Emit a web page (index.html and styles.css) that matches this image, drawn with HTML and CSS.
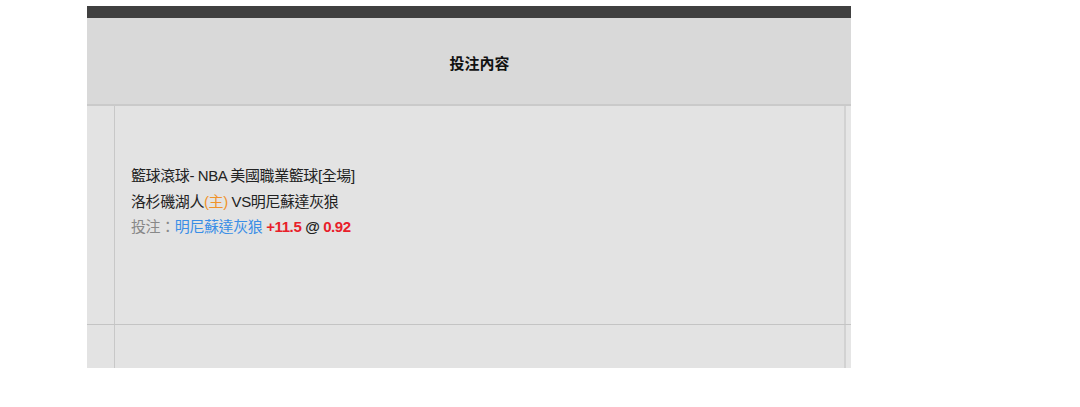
FILE: index.html
```html
<!DOCTYPE html>
<html>

<head>
    <meta charset="utf-8">
    <title>投注內容</title>
    <link rel="stylesheet" href="styles.css">
</head>

<body>
    <div class="wrap">
        <div class="topbar"></div>
        <div class="head">
            <div class="side"></div>
            <div class="title">投注內容</div>
            <div class="side"></div>
        </div>
        <div class="row">
            <div class="side"></div>
            <div class="cell">
                <p>籃球滾球- NBA 美國職業籃球[全場]</p>
                <p>洛杉磯湖人<span class="home">(主)</span> VS明尼蘇達灰狼</p>
                <p><span class="label">投注：</span><span class="team">明尼蘇達灰狼</span> <b class="red">+11.5</b> <b>@</b> <b class="red">0.92</b></p>
            </div>
            <div class="side end"></div>
        </div>
        <div class="row short">
            <div class="side"></div>
            <div class="cell"></div>
            <div class="side end"></div>
        </div>
    </div>
</body>

</html>
```

FILE: styles.css
```css
*{
    padding: 0;
    margin: 0;
}
body{
    background-color: #fff;
    font-family: "Liberation Sans", "Noto Sans CJK TC", sans-serif;
    color: #222;
}
.wrap{
    width: 764px;
    margin: 6px 0 0 87px;
}
.topbar{
    height: 12px;
    background-color: #404040;
}
.head{
    display: grid;
    grid-template-columns: 28px 1fr 7px;
    height: 86px;
    background-color: #d9d9d9;
    border-bottom: 2px solid #cacaca;
}
.title{
    display: flex;
    align-items: center;
    justify-content: center;
    font-size: 15px;
    font-weight: 700;
    color: #111;
    padding-top: 2px;
}
.row{
    display: grid;
    grid-template-columns: 28px 1fr 7px;
    background-color: #e3e3e3;
    border-bottom: 1px solid #c4c4c4;
}
.row.short{
    height: 43px;
    border-bottom: none;
}
.row .side{
    border-right: 1px solid #c8c8c8;
}
.row .side.end{
    border-right: none;
    border-left: 2px solid #d2d2d2;
    background-color: #e6e6e6;
}
.cell{
    height: 218px;
    padding: 57px 16px 0;
    box-sizing: border-box;
    font-size: 15px;
    line-height: 25.5px;
    letter-spacing: -0.4px;
}
.row.short .cell{
    height: 43px;
}
.home{
    color: #f0932b;
}
.label{
    color: #888;
}
.team{
    color: #3a8ee6;
}
.red{
    color: #e8202a;
}
b{
    font-weight: 700;
}
```
